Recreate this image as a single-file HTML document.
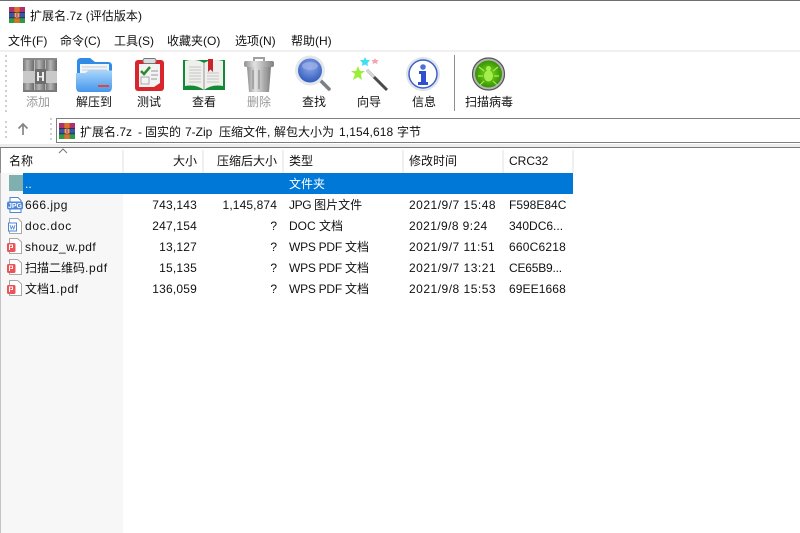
<!DOCTYPE html>
<html lang="zh"><head><meta charset="utf-8"><title>扩展名.7z (评估版本)</title>
<style>
html,body{margin:0;padding:0;background:#fff}
body{width:800px;height:533px;position:relative;overflow:hidden;font:12px "Liberation Sans","Noto Sans CJK SC",sans-serif;color:#111}
.a{position:absolute}
.t{position:absolute;white-space:nowrap;line-height:16px;height:16px}
.r{text-align:right}
.c{text-align:center;width:60px;margin-left:-30px}
.n{letter-spacing:.2px}
.m{letter-spacing:.5px}
.w{letter-spacing:-.25px}
svg{position:absolute;overflow:visible}
.g{color:#9a9a9a}
.d{position:absolute;width:2px;height:2px;background:#d0d0d0}
.s{position:absolute;top:150px;width:2px;height:23px;background:#f0f0f0}
</style></head><body>
<svg width="0" height="0" style="position:absolute"><defs>
<linearGradient id="gb" x1="0" y1="0" x2="0" y2="1"><stop offset="0" stop-color="#a8d6fc"/><stop offset="1" stop-color="#4596ec"/></linearGradient>
<radialGradient id="gm" cx=".5" cy=".35" r=".7"><stop offset="0" stop-color="#8fa9ea"/><stop offset="1" stop-color="#2a56b8"/></radialGradient>
<radialGradient id="gv" cx=".5" cy=".5" r=".55"><stop offset="0" stop-color="#7ee015"/><stop offset="1" stop-color="#2f8a06"/></radialGradient>
<linearGradient id="gs" x1="0" y1="0" x2="1" y2="0"><stop offset="0" stop-color="#8f8f8f"/><stop offset=".35" stop-color="#e2e2e2"/><stop offset="1" stop-color="#7f7f7f"/></linearGradient>
<linearGradient id="gd" x1="0" y1="0" x2="1" y2="0"><stop offset="0" stop-color="#777"/><stop offset=".4" stop-color="#b5b5b5"/><stop offset="1" stop-color="#6a6a6a"/></linearGradient>
<symbol id="rar" viewBox="0 0 16 16"><rect width="16" height="5.300" fill="#b0306a"/><rect y="5.300" width="16" height="5.400" fill="#3b53a8"/><rect y="10.700" width="16" height="5.300" fill="#2f9a45"/><rect x="5.300" width="5.400" height="16" fill="#d9722a"/><rect x="6.600" y="5" width="2.800" height="6" fill="#fff"/><rect x="0" y="5" width="16" height=".7" fill="#222"/><rect x="0" y="10.500" width="16" height=".7" fill="#222"/><rect x="7.300" y="6" width="1.400" height="4" fill="#b03020"/></symbol>
<symbol id="pdf" viewBox="0 0 16 16"><path d="M2.500.5H10.500L14.500 4V15.500H2.500Z" fill="#fff" stroke="#a8a8a8"/><rect x="0" y="5" width="8.500" height="9" rx="1.500" fill="#ec5557"/><path d="M2.500 12V7H5.500V9.500H3.500" fill="none" stroke="#fff" stroke-width="1"/></symbol>
</defs></svg>

<!-- title and menu -->
<div class="a" style="left:0;top:0;width:800px;height:1px;background:#6f6f6f"></div>
<svg style="left:9px;top:7px" width="16" height="16"><use href="#rar"/></svg>
<div class="t" style="left:30px;top:8px;letter-spacing:.05px">扩展名.7z (评估版本)</div>
<div class="t" style="left:8px;top:33px">文件(F)</div>
<div class="t" style="left:60px;top:33px">命令(C)</div>
<div class="t" style="left:114px;top:33px">工具(S)</div>
<div class="t" style="left:167px;top:33px">收藏夹(O)</div>
<div class="t" style="left:235px;top:33px">选项(N)</div>
<div class="t" style="left:291px;top:33px">帮助(H)</div>
<div class="a" style="left:0;top:50px;width:800px;height:2px;background:#f0f0f0"></div>

<!-- grip dots -->
<div class="d" style="left:5px;top:55px"></div><div class="d" style="left:5px;top:60px"></div><div class="d" style="left:5px;top:65px"></div><div class="d" style="left:5px;top:70px"></div><div class="d" style="left:5px;top:75px"></div><div class="d" style="left:5px;top:80px"></div><div class="d" style="left:5px;top:85px"></div><div class="d" style="left:5px;top:90px"></div><div class="d" style="left:5px;top:95px"></div><div class="d" style="left:5px;top:100px"></div><div class="d" style="left:5px;top:105px"></div><div class="d" style="left:5px;top:110px"></div>
<div class="d" style="left:5px;top:121px"></div><div class="d" style="left:5px;top:126px"></div><div class="d" style="left:5px;top:131px"></div><div class="d" style="left:5px;top:136px"></div>
<div class="d" style="left:50px;top:118px"></div><div class="d" style="left:50px;top:123px"></div><div class="d" style="left:50px;top:128px"></div><div class="d" style="left:50px;top:133px"></div><div class="d" style="left:50px;top:138px"></div>

<!-- add -->
<svg style="left:23px;top:58px" width="34" height="34" viewBox="0 0 34 34"><rect x="0" y="0" width="11" height="34" fill="url(#gd)"/><rect x="11.500" y="0" width="11" height="34" fill="url(#gd)"/><rect x="23" y="0" width="11" height="34" fill="url(#gd)"/><rect x="0" y="0" width="34" height="2" fill="#8a8a8a"/><rect x="0" y="32" width="34" height="2" fill="#7a7a7a"/><rect x="0" y="13" width="34" height="12" fill="#c9c9c9"/><rect x="12" y="11" width="11" height="15" fill="#6d6d6d"/><rect x="14" y="14" width="2" height="9" fill="#eee"/><rect x="19" y="14" width="2" height="9" fill="#eee"/><rect x="16" y="18" width="3" height="1.500" fill="#eee"/></svg>
<div class="t c g" style="left:38px;top:94px">添加</div>
<!-- extract -->
<svg style="left:76px;top:58px" width="36" height="34" viewBox="0 0 36 34"><path d="M1 28V4Q1 0 5 0H14L19 4H32Q36 4 36 8V28Z" fill="#2f8be6"/><rect x="4" y="6" width="29" height="12" fill="#f2f6fb"/><path d="M6 9H31M6 12H31" stroke="#c5ccd6"/><path d="M0 15H9L13 12.500H36V29Q36 34 32 34H4Q0 34 0 29Z" fill="url(#gb)"/><rect x="22" y="27" width="11" height="2" fill="#e24636"/></svg>
<div class="t c" style="left:94px;top:94px">解压到</div>
<!-- test -->
<svg style="left:135px;top:58px" width="29" height="33" viewBox="0 0 29 33"><rect x="0" y="2" width="29" height="31" rx="3" fill="#d8262c"/><path d="M4 6H25V25L19 29H4Z" fill="#f3f3f3"/><rect x="8" y="0.500" width="13" height="5" rx="2" fill="#dcdcdc" stroke="#777"/><path d="M6 13L9 16L15 9" fill="none" stroke="#2d8a30" stroke-width="2.500"/><rect x="6" y="19" width="8" height="7" fill="none" stroke="#aaa"/><path d="M16 13H23M16 17H23M16 21H22" stroke="#999"/></svg>
<div class="t c" style="left:149px;top:94px">测试</div>
<!-- view -->
<svg style="left:183px;top:59px" width="42" height="32" viewBox="0 0 42 32"><path d="M0 1H42V31H0Z" fill="#128a35"/><path d="M2 2Q13 -1 21 4Q29 -1 40 2V27Q29 25 21 31Q13 25 2 27Z" fill="#efefec"/><path d="M21 4V31" stroke="#999"/><path d="M6 8H18M6 11H18M6 14H18M6 17H18M6 20H18M6 23H18M24 14H36M24 17H36M24 20H36M24 23H36" stroke="#c5c5c5"/><path d="M25 0H30V13L27.500 10.500L25 13Z" fill="#c8242d"/></svg>
<div class="t c" style="left:204px;top:94px">查看</div>
<!-- delete -->
<svg style="left:244px;top:57px" width="30" height="35" viewBox="0 0 30 35"><path d="M10 4V1H20V4" fill="none" stroke="#a0a0a0" stroke-width="2"/><rect x="0" y="4" width="30" height="6" rx="2" fill="url(#gs)"/><path d="M3 10H27L25 35H5Z" fill="url(#gs)"/><path d="M9 13V32M15 13V32M21 13V32" stroke="#a5a5a5" stroke-width="2"/></svg>
<div class="t c g" style="left:259px;top:94px">删除</div>
<!-- find -->
<svg style="left:295px;top:55px" width="36" height="36" viewBox="0 0 36 36"><path d="M24 24L34 34" stroke="#7b8087" stroke-width="3.500" stroke-linecap="round"/><circle cx="15" cy="15.500" r="15" fill="#e2e6ed"/><circle cx="15" cy="15.500" r="12" fill="url(#gm)"/><ellipse cx="15" cy="11" rx="8" ry="4" fill="#9fb1ea" opacity=".7"/></svg>
<div class="t c" style="left:314px;top:94px">查找</div>
<!-- wizard -->
<svg style="left:351px;top:55px" width="38" height="36" viewBox="0 0 38 36"><path d="M16 15L36 35" stroke="#4a4a4a" stroke-width="3"/><path d="M16 15L23 22" stroke="#d5d5d5" stroke-width="3"/><path d="M7 11L9 16L14 16L10 19L11 25L7 22L2 25L4 19L0 16L5 16Z" fill="#9dee38"/><path d="M14 2L15.500 5L19 5L16.500 8L17 11L14 9.500L11 11L11.500 8L9 5L12.500 5Z" fill="#3fe0f5"/><path d="M24 3L25 5L27.500 5L26 7L26.500 9L24 8L21.500 9L22 7L20.500 5L23 5Z" fill="#f6a5ad"/></svg>
<div class="t c" style="left:369px;top:94px">向导</div>
<!-- info -->
<svg style="left:406px;top:57px" width="34" height="34" viewBox="0 0 34 34"><circle cx="17" cy="17" r="17" fill="#dfe3ea"/><circle cx="17" cy="17" r="14" fill="#fff" stroke="#3d61c8" stroke-width="1.500"/><circle cx="17" cy="10" r="2.800" fill="#4d70d5"/><path d="M13 14H20V25H22V28H12V25H15V17H13Z" fill="#2d4fd0"/></svg>
<div class="t c" style="left:424px;top:94px">信息</div>
<div class="a" style="left:454px;top:55px;width:1px;height:56px;background:#8f8f8f"></div>
<!-- virus -->
<svg style="left:472px;top:57px" width="34" height="34" viewBox="0 0 34 34"><circle cx="16.500" cy="17" r="16.500" fill="#b5b5b5"/><circle cx="16.500" cy="17" r="16" fill="none" stroke="#555" stroke-width="1.200"/><circle cx="16.500" cy="17" r="13.500" fill="url(#gv)"/><ellipse cx="16.500" cy="19" rx="4.500" ry="5.500" fill="#a5ee50"/><circle cx="16.500" cy="11.500" r="2.500" fill="#a5ee50"/><path d="M12 14L7 10M21 14L26 10M11 19H6M22 19H27M12 24L8 28M21 24L25 28" stroke="#a5ee50" stroke-width="1.200"/></svg>
<div class="t c" style="left:489px;top:94px">扫描病毒</div>

<!-- address -->
<svg style="left:17px;top:122px" width="12" height="14" viewBox="0 0 12 14"><path d="M6 13V2M1.500 6.500L6 2L10.500 6.500" fill="none" stroke="#858585" stroke-width="1.700"/></svg>
<div class="a" style="left:56px;top:118px;width:744px;height:25px;box-sizing:border-box;border:1px solid #7f7f7f;border-right:0"></div>
<svg style="left:59px;top:123px" width="16" height="16"><use href="#rar"/></svg>
<div class="t" style="left:80px;top:124px">扩展名.7z</div>
<div class="t" style="left:138px;top:124px">-</div>
<div class="t" style="left:145px;top:124px">固实的</div>
<div class="t" style="left:185px;top:124px">7-Zip</div>
<div class="t" style="left:219px;top:124px">压缩文件,</div>
<div class="t" style="left:274px;top:124px">解包大小为</div>
<div class="t" style="left:339px;top:124px;letter-spacing:.1px">1,154,618</div>
<div class="t" style="left:397px;top:124px">字节</div>
<div class="a" style="left:0;top:144px;width:800px;height:3px;background:#ececec"></div>
<div class="a" style="left:0;top:147px;width:800px;height:1px;background:#777"></div>

<!-- list -->
<div class="a" style="left:0;top:148px;width:1px;height:25px;background:#8a8a8a"></div>
<div class="a" style="left:0;top:173px;width:1px;height:360px;background:#c4c4c4"></div>
<div class="a" style="left:1px;top:173px;width:122px;height:360px;background:#f7f7f7"></div>
<svg style="left:58px;top:148px" width="10" height="6"><path d="M1 5L5 1L9 5" fill="none" stroke="#777"/></svg>
<div class="t" style="left:9px;top:153px">名称</div>
<div class="t r" style="left:122px;width:75px;top:153px">大小</div>
<div class="t r" style="left:202px;width:75px;top:153px">压缩后大小</div>
<div class="t" style="left:289px;top:153px">类型</div>
<div class="t" style="left:409px;top:153px">修改时间</div>
<div class="t" style="left:509px;top:153px">CRC32</div>
<div class="s" style="left:122px"></div><div class="s" style="left:202px"></div><div class="s" style="left:282px"></div><div class="s" style="left:402px"></div><div class="s" style="left:502px"></div><div class="s" style="left:572px"></div>

<div class="a" style="left:23px;top:173px;width:550px;height:21px;background:#0078d7"></div>
<div class="a" style="left:9px;top:175px;width:14px;height:16px;background:#7fafaf"></div>
<div class="t" style="left:25px;top:176px;color:#fff">..</div>
<div class="t" style="left:289px;top:176px;color:#fff">文件夹</div>

<svg style="left:7px;top:197px" width="16" height="16" viewBox="0 0 16 16"><path d="M3 .5H11L14 3.500V15.500H3Z" fill="#fff" stroke="#4d86d8"/><rect x="0" y="4.500" width="16" height="8" rx="2" fill="#4d86d8"/><text x="8" y="11" text-anchor="middle" font-size="7" font-weight="bold" fill="#fff" font-family="Liberation Sans">JPG</text></svg>
<div class="t m" style="left:25px;top:197px">666.jpg</div>
<div class="t r n" style="left:122px;width:75px;top:197px">743,143</div>
<div class="t r" style="left:202px;width:75px;top:197px;letter-spacing:.12px">1,145,874</div>
<div class="t" style="left:289px;top:197px"><span style="letter-spacing:-.4px">JPG </span>图片文件</div>
<div class="t m" style="left:409px;top:197px">2021/9/7 15:48</div>
<div class="t" style="left:509px;top:197px">F598E84C</div>

<svg style="left:7px;top:218px" width="16" height="16" viewBox="0 0 16 16"><path d="M2.500.5H11L14.500 4V15.500H2.500Z" fill="#fff" stroke="#a8a8a8"/><rect x="1.500" y="5" width="8" height="8" fill="#fff" stroke="#4d86d8"/><path d="M3 7L4.200 11L5.500 8L6.800 11L8 7" fill="none" stroke="#4d86d8" stroke-width=".8"/></svg>
<div class="t" style="left:25px;top:218px;letter-spacing:.7px">doc.doc</div>
<div class="t r n" style="left:122px;width:75px;top:218px">247,154</div>
<div class="t r" style="left:202px;width:75px;top:218px">?</div>
<div class="t" style="left:289px;top:218px">DOC 文档</div>
<div class="t" style="left:409px;top:218px;letter-spacing:.4px">2021/9/8 9:24</div>
<div class="t" style="left:509px;top:218px">340DC6...</div>

<svg style="left:7px;top:238px" width="16" height="16"><use href="#pdf"/></svg>
<div class="t" style="left:25px;top:239px;letter-spacing:.4px">shouz_w.pdf</div>
<div class="t r n" style="left:122px;width:75px;top:239px">13,127</div>
<div class="t r" style="left:202px;width:75px;top:239px">?</div>
<div class="t" style="left:289px;top:239px"><span class="w">WPS PDF </span>文档</div>
<div class="t m" style="left:409px;top:239px">2021/9/7 11:51</div>
<div class="t" style="left:509px;top:239px;letter-spacing:.2px">660C6218</div>

<svg style="left:7px;top:259px" width="16" height="16"><use href="#pdf"/></svg>
<div class="t" style="left:25px;top:260px">扫描二维码<span style="letter-spacing:.7px">.pdf</span></div>
<div class="t r n" style="left:122px;width:75px;top:260px">15,135</div>
<div class="t r" style="left:202px;width:75px;top:260px">?</div>
<div class="t" style="left:289px;top:260px"><span class="w">WPS PDF </span>文档</div>
<div class="t m" style="left:409px;top:260px">2021/9/7 13:21</div>
<div class="t" style="left:509px;top:260px;letter-spacing:-.2px">CE65B9...</div>

<svg style="left:7px;top:280px" width="16" height="16"><use href="#pdf"/></svg>
<div class="t" style="left:25px;top:281px">文档<span style="letter-spacing:.6px">1.pdf</span></div>
<div class="t r n" style="left:122px;width:75px;top:281px">136,059</div>
<div class="t r" style="left:202px;width:75px;top:281px">?</div>
<div class="t" style="left:289px;top:281px"><span class="w">WPS PDF </span>文档</div>
<div class="t m" style="left:409px;top:281px">2021/9/8 15:53</div>
<div class="t" style="left:509px;top:281px;letter-spacing:.1px">69EE1668</div>
</body></html>
